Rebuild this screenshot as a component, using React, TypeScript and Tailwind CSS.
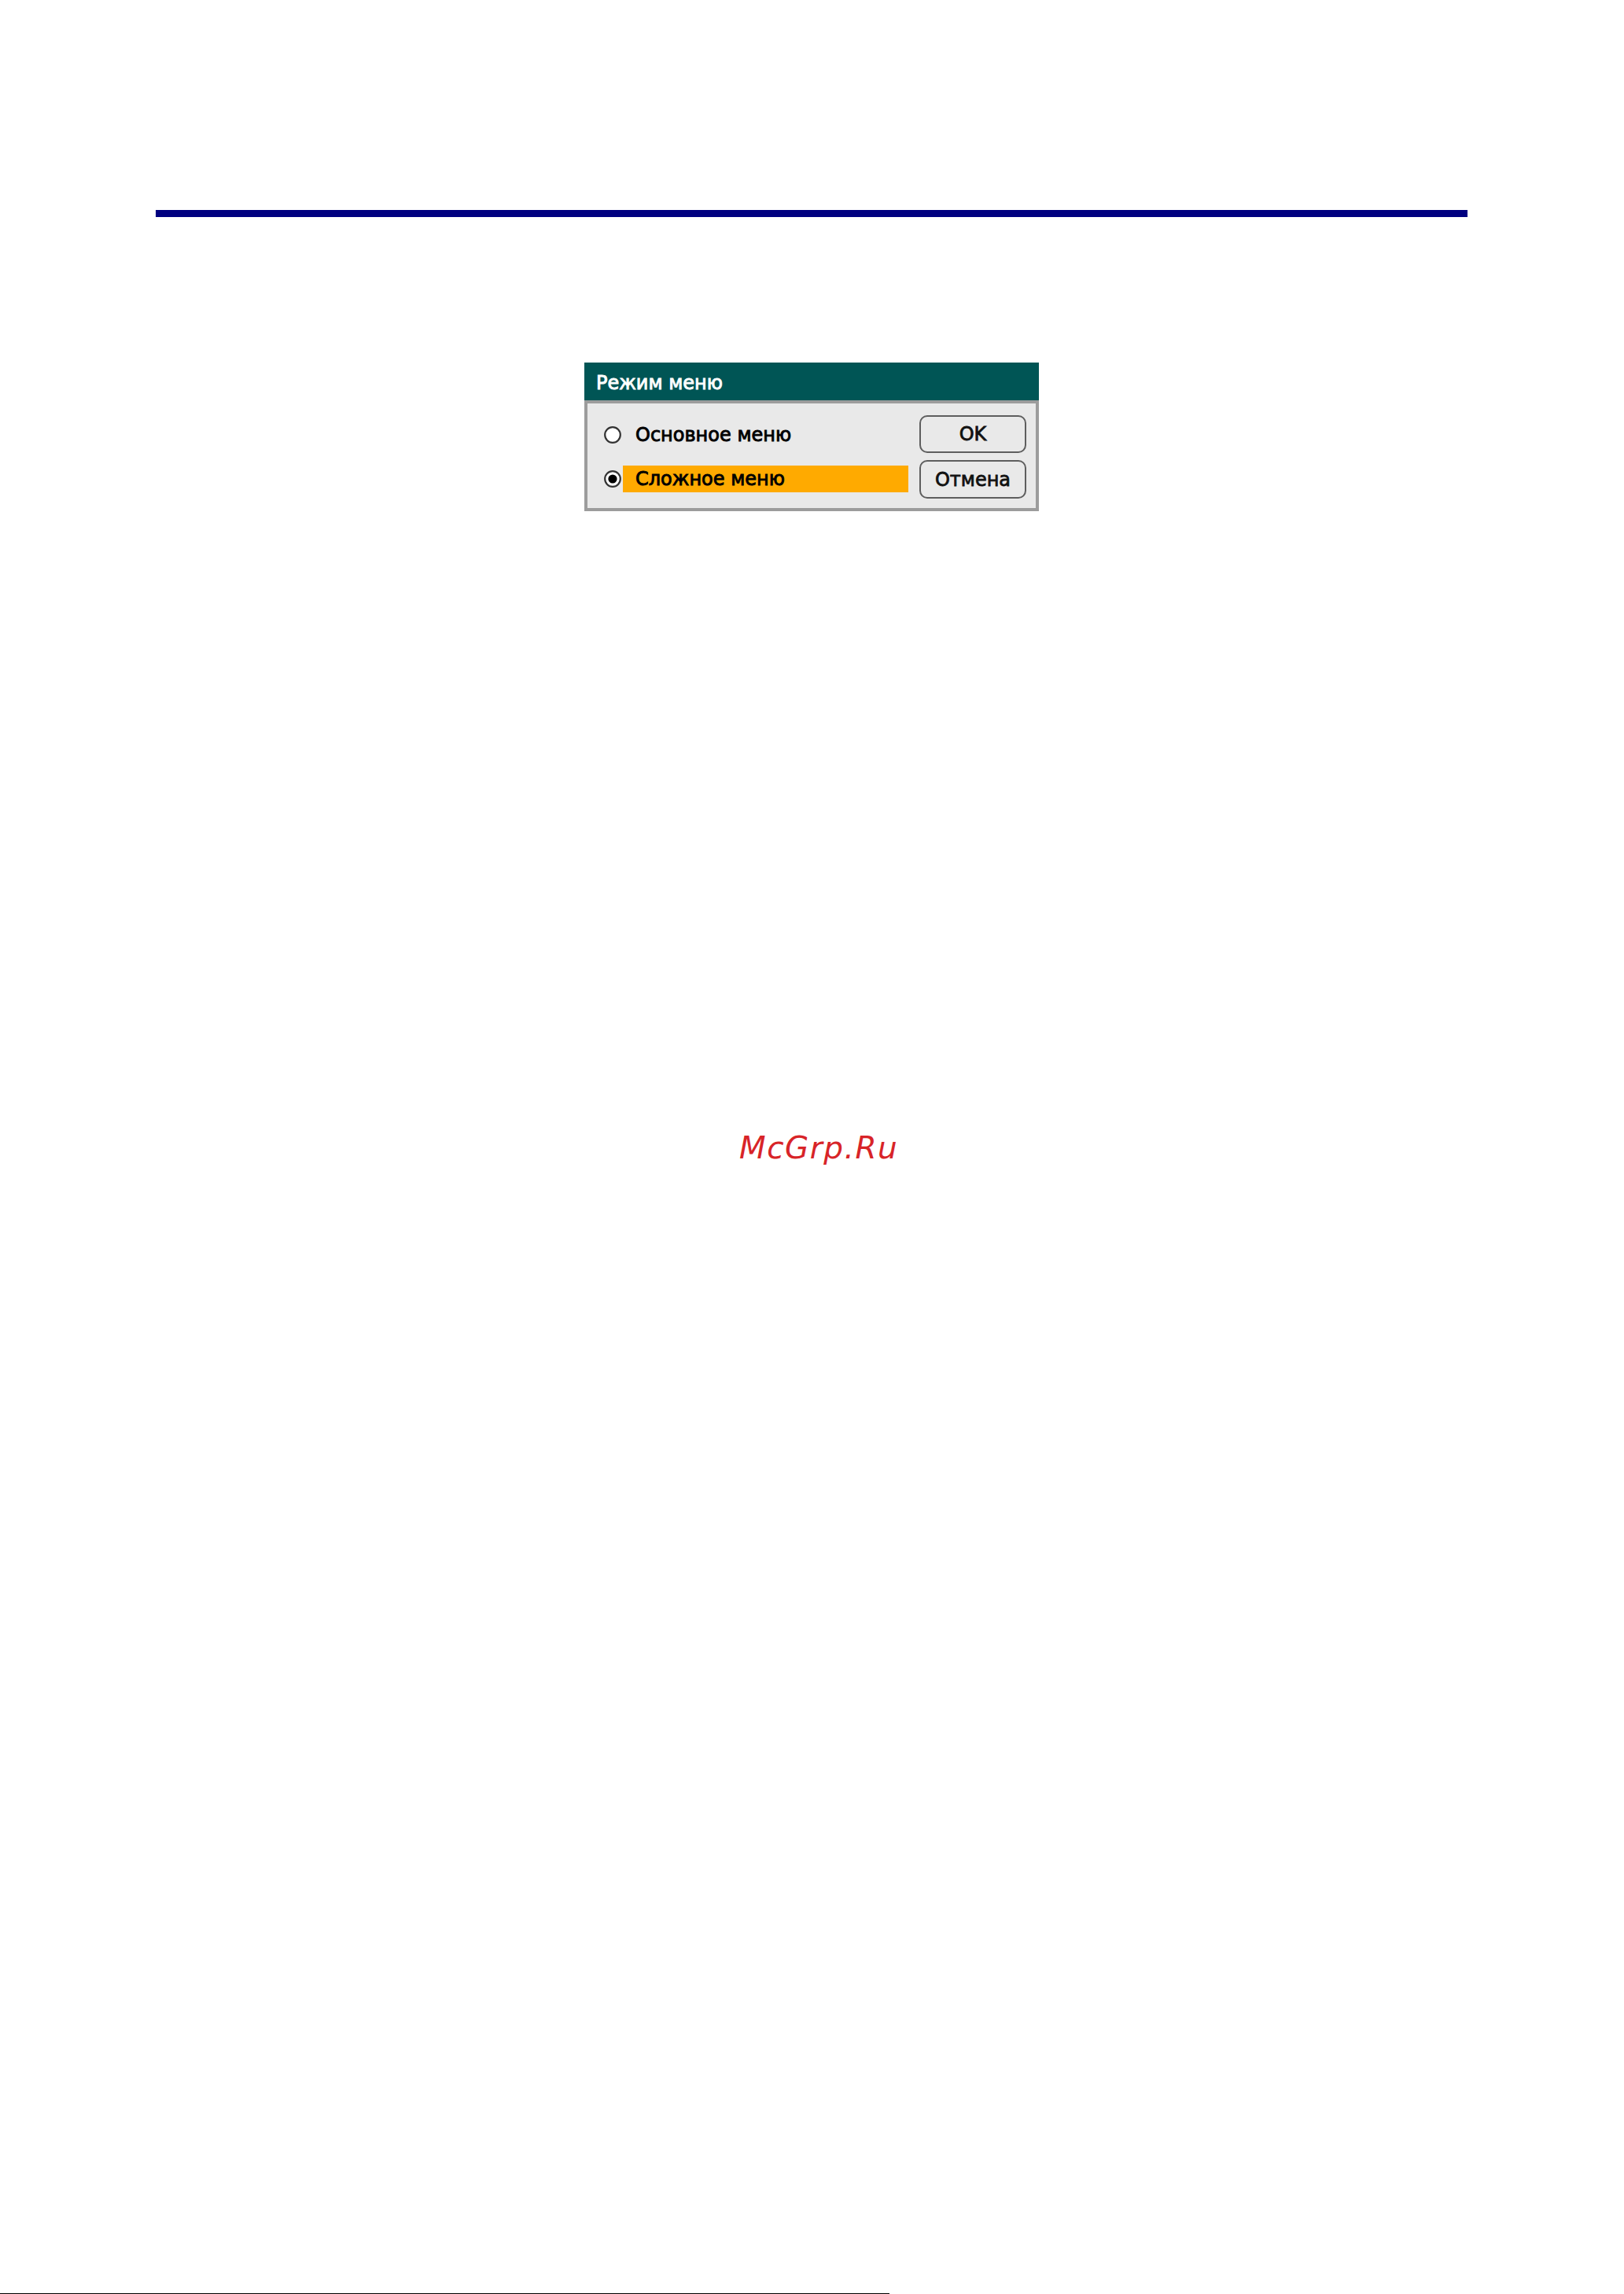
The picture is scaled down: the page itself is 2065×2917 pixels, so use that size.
import React from "react";

const uiFont = { fontFamily: '"DejaVu Sans", Verdana, sans-serif' };

function Radio({ checked }: { checked?: boolean }) {
  return (
    <svg width="22" height="22" viewBox="0 0 22 22" className="shrink-0">
      <circle cx="11" cy="11" r="9.8" fill="#ffffff" stroke="#333333" strokeWidth="2.2" />
      {checked && <circle cx="11" cy="11" r="5.6" fill="#000000" />}
    </svg>
  );
}

type Option = { label: string; selected?: boolean };

const options: Option[] = [
  { label: "Основное меню" },
  { label: "Сложное меню", selected: true },
];

export default function App() {
  return (
    <div className="flex h-[2917px] w-[2065px] flex-col bg-white">
      {/* page header rule */}
      <div className="ml-[198px] mt-[267px] h-[9px] w-[1668px] bg-[#000080]" />

      {/* menu mode dialog */}
      <div className="ml-[743px] mt-[185px] w-[578px]" style={uiFont}>
        <div className="flex h-[48px] items-center bg-[#005555] pl-[15px] pt-[3px] text-[24px] text-white [-webkit-text-stroke:0.9px_white]">
          Режим меню
        </div>
        <div className="flex items-start border-4 border-[#9c9c9c] bg-[#e9e9e9] pl-[21px] pr-[12px]">
          <div className="flex flex-col gap-[22px] pt-[23px]">
            {options.map((o) => (
              <div key={o.label} className="flex h-[34px] items-center gap-[2px]">
                <Radio checked={o.selected} />
                <div
                  className={
                    o.selected
                      ? "flex h-[34px] w-[363px] items-center bg-[#ffaa00] pl-[16px] text-[24px] text-black [-webkit-text-stroke:0.9px_black]"
                      : "flex h-[34px] w-[363px] items-center pl-[16px] text-[24px] text-black [-webkit-text-stroke:0.9px_black]"
                  }
                >
                  {o.label}
                </div>
              </div>
            ))}
          </div>
          <div className="ml-[14px] flex flex-col gap-[9px] pb-[12px] pt-[15px]">
            <button className="flex h-[48px] w-[136px] items-center justify-center rounded-[10px] border-[2.5px] border-[#5e5e5e] bg-[#e9e9e9] text-[24px] text-[#111] [-webkit-text-stroke:0.8px_#111]">
              OK
            </button>
            <button className="flex h-[49px] w-[136px] items-center justify-center rounded-[10px] border-[2.5px] border-[#5e5e5e] bg-[#e9e9e9] text-[24px] text-[#111] [-webkit-text-stroke:0.8px_#111]">
              Отмена
            </button>
          </div>
        </div>
      </div>

      {/* watermark */}
      <div
        className="ml-[940px] mt-[790px] text-[39px] italic leading-none tracking-[1.5px] text-[#d82428]"
        style={uiFont}
      >
        McGrp.Ru
      </div>

      {/* footer rule */}
      <div className="mt-auto h-px w-[1131px] bg-black" />
    </div>
  );
}
